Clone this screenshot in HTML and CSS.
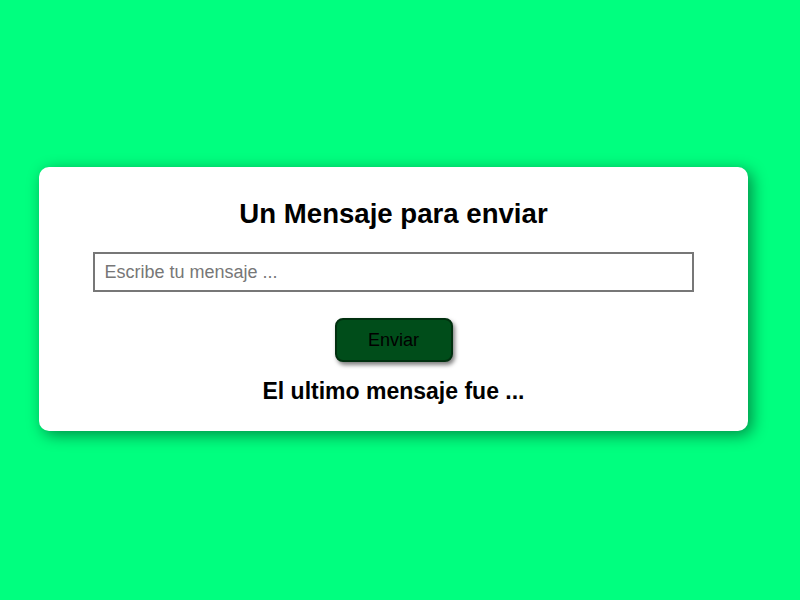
FILE: index.html
```html
<!DOCTYPE html>
<html lang="es">
<head>
<meta charset="utf-8">
<title>Mensaje</title>
<link rel="stylesheet" href="styles.css">
</head>
<body>
<main class="card">
  <h1 class="title">Un Mensaje para enviar</h1>
  <input class="msg-input" type="text" placeholder="Escribe tu mensaje ...">
  <button class="send-btn" type="button">Enviar</button>
  <h2 class="last">El ultimo mensaje fue ...</h2>
</main>
</body>
</html>
```
FILE: styles.css
```css
html, body {
  margin: 0;
  height: 100%;
}
body {
  background: #00ff7f;
  font-family: "Liberation Sans", Arial, sans-serif;
  display: flex;
  align-items: center;
  padding-left: 39px;
  padding-bottom: 2px;
  box-sizing: border-box;
}
.card {
  width: 709px;
  height: 264px;
  box-sizing: border-box;
  background: #fff;
  border-radius: 10px;
  box-shadow: 4px 4px 16px rgba(0, 0, 0, 0.45);
  display: flex;
  flex-direction: column;
  align-items: center;
  padding-top: 31px;
}
.title {
  margin: 0;
  font-size: 27.6px;
  font-weight: bold;
  line-height: 32px;
  color: #000;
}
.msg-input {
  margin-top: 22px;
  width: 601px;
  height: 40px;
  box-sizing: border-box;
  border: 2px solid #777;
  padding: 0 10px;
  font-family: "Liberation Sans", Arial, sans-serif;
  font-size: 18px;
  color: #333;
  outline: none;
  margin-left: -1px;
}
.msg-input::placeholder {
  color: #777;
}
.send-btn {
  margin-top: 26px;
  width: 118px;
  height: 44px;
  background: #004d1a;
  border: 2px solid #00300f;
  border-radius: 8px;
  box-shadow: 2px 3px 4px rgba(0, 0, 0, 0.5);
  font-family: "Liberation Sans", Arial, sans-serif;
  font-size: 18px;
  color: #000;
  cursor: pointer;
}
.last {
  margin: 16px 0 0;
  font-size: 23px;
  font-weight: bold;
  line-height: 26px;
  color: #000;
}
```
